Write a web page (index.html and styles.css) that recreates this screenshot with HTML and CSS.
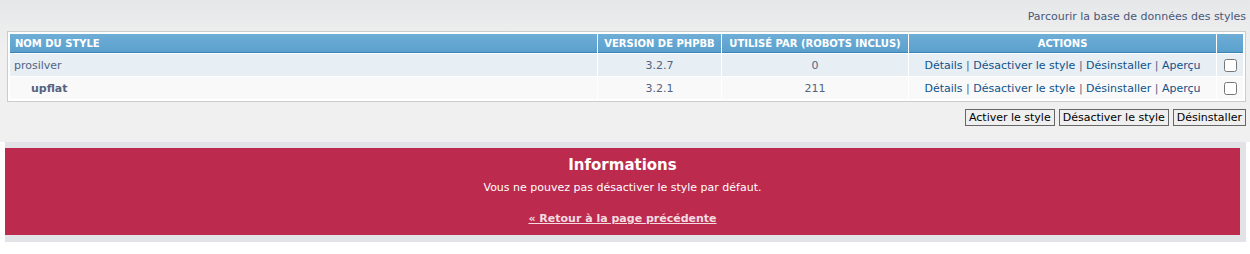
FILE: index.html
```html
<!DOCTYPE html>
<html lang="fr">
<head>
    <meta charset="UTF-8">
    <title>Styles</title>
    <link rel="stylesheet" href="styles.css">
</head>
<body>
    <div class="main">
        <p class="quick"><a href="#">Parcourir la base de données des styles</a></p>
        <table class="styles">
            <thead>
                <tr>
                    <th class="name">Nom du style</th>
                    <th class="version">Version de phpBB</th>
                    <th class="used">Utilisé par (robots inclus)</th>
                    <th class="actions">Actions</th>
                    <th class="mark"></th>
                </tr>
            </thead>
            <tbody>
                <tr class="row1">
                    <td class="name">prosilver</td>
                    <td class="center">3.2.7</td>
                    <td class="center">0</td>
                    <td class="center"><a href="#">Détails</a> | <a href="#">Désactiver le style</a> | <a href="#">Désinstaller</a> | <a href="#">Aperçu</a></td>
                    <td class="center"><input type="checkbox"></td>
                </tr>
                <tr class="row2">
                    <td class="name child"><strong>upflat</strong></td>
                    <td class="center">3.2.1</td>
                    <td class="center">211</td>
                    <td class="center"><a href="#">Détails</a> | <a href="#">Désactiver le style</a> | <a href="#">Désinstaller</a> | <a href="#">Aperçu</a></td>
                    <td class="center"><input type="checkbox"></td>
                </tr>
            </tbody>
        </table>
        <div class="buttons">
            <button class="button2">Activer le style</button>
            <button class="button2">Désactiver le style</button>
            <button class="button2">Désinstaller</button>
        </div>
    </div>

    <div class="panel">
        <div class="errorbox">
            <h3>Informations</h3>
            <p>Vous ne pouvez pas désactiver le style par défaut.</p>
            <p class="back"><a href="#">« Retour à la page précédente</a></p>
        </div>
    </div>
</body>
</html>
```

FILE: styles.css
```css
body {
    margin: 0;
    font-family: "DejaVu Sans", Verdana, sans-serif;
    font-size: 11px;
    color: #536482;
    background-color: #fff;
}

a {
    color: #105289;
    text-decoration: none;
}

.main {
    height: 142px;
    box-sizing: border-box;
    padding: 10px 4px 0 7px;
    background: linear-gradient(#e6e7e9, #f0f0f0 50px);
}

.quick {
    margin: 0;
    text-align: right;
    line-height: 14px;
}

.quick a {
    color: #47587a;
}

.styles {
    width: 100%;
    margin-top: 7px;
    border: 1px solid #ccc;
    border-spacing: 1px;
    padding: 1px;
    background-color: #fff;
    table-layout: fixed;
}

.styles th {
    height: 18px;
    padding: 0 5px;
    background: linear-gradient(#6eaed7, #5ba0cd);
    border-bottom: 1px solid #3d84b5;
    color: #fff;
    font-size: 10px;
    font-weight: bold;
    text-transform: uppercase;
    white-space: nowrap;
    text-align: center;
}

.styles th.name {
    text-align: left;
}

.styles th.version { width: 113px; }
.styles th.used { width: 176px; }
.styles th.actions { width: 297px; }
.styles th.mark { width: 16px; }

.styles td {
    height: 22px;
    padding: 0 4px;
    white-space: nowrap;
}

.styles td.center {
    text-align: center;
}

.styles td.child {
    padding-left: 21px;
}

.row1 td {
    background-color: #e7eef4;
}

.row2 td {
    background-color: #f9f9f9;
}

.styles input[type="checkbox"] {
    width: 13px;
    height: 13px;
    margin: 0;
    vertical-align: middle;
}

.buttons {
    margin-top: 7px;
    text-align: right;
    font-size: 0;
}

.button2 {
    margin-left: 4px;
    padding: 0 3px;
    height: 17px;
    font-family: "DejaVu Sans", Verdana, sans-serif;
    font-size: 11px;
    color: #000;
    background-color: #efefef;
    border: 1px solid #666;
    border-radius: 0;
}

.panel {
    width: 1241px;
    box-sizing: border-box;
    margin-left: 5px;
    padding: 6px 6px 7px 0;
    background-color: #e2e3e6;
}

.errorbox {
    height: 87px;
    box-sizing: border-box;
    padding-top: 8px;
    background-color: #bc2a4d;
    color: #fff;
    text-align: center;
}

.errorbox h3 {
    margin: 0;
    font-size: 15px;
    line-height: 18px;
    font-weight: bold;
}

.errorbox p {
    margin: 7px 0 0;
    line-height: 14px;
}

.errorbox .back {
    margin-top: 17px;
}

.errorbox .back a {
    color: #f3dce1;
    font-weight: bold;
    text-decoration: underline;
}
```
